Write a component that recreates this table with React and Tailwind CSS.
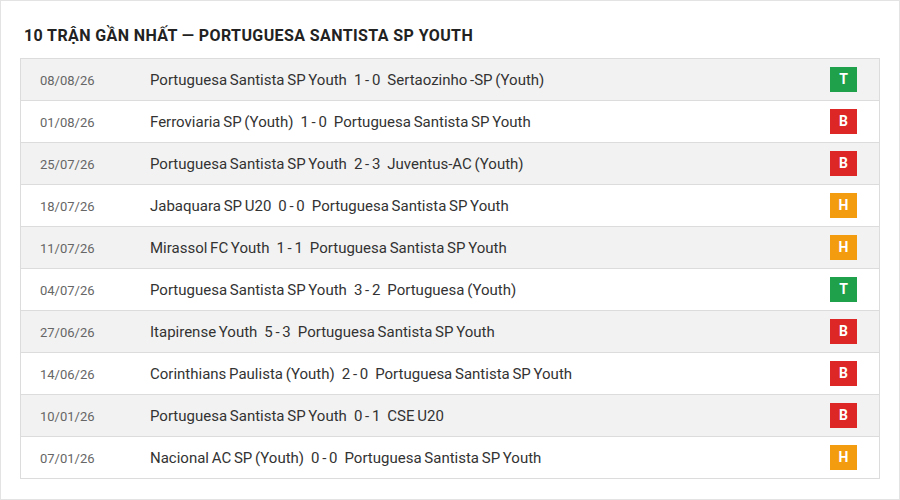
const rows = [
  ["08/08/26", "Portuguesa Santista SP Youth", "1 - 0", "Sertaozinho -SP (Youth)", "T"],
  ["01/08/26", "Ferroviaria SP (Youth)", "1 - 0", "Portuguesa Santista SP Youth", "B"],
  ["25/07/26", "Portuguesa Santista SP Youth", "2 - 3", "Juventus-AC (Youth)", "B"],
  ["18/07/26", "Jabaquara SP U20", "0 - 0", "Portuguesa Santista SP Youth", "H"],
  ["11/07/26", "Mirassol FC Youth", "1 - 1", "Portuguesa Santista SP Youth", "H"],
  ["04/07/26", "Portuguesa Santista SP Youth", "3 - 2", "Portuguesa (Youth)", "T"],
  ["27/06/26", "Itapirense Youth", "5 - 3", "Portuguesa Santista SP Youth", "B"],
  ["14/06/26", "Corinthians Paulista (Youth)", "2 - 0", "Portuguesa Santista SP Youth", "B"],
  ["10/01/26", "Portuguesa Santista SP Youth", "0 - 1", "CSE U20", "B"],
  ["07/01/26", "Nacional AC SP (Youth)", "0 - 0", "Portuguesa Santista SP Youth", "H"],
];

const badge = {
  T: "bg-[#1fa04a]",
  B: "bg-[#dd2626]",
  H: "bg-[#f39c0f]",
};

export default function App() {
  return (
    <div
      className="w-[900px] h-[500px] border border-[#e3e3e3] bg-white px-[19px] box-border"
      style={{ fontFamily: "Roboto, 'Liberation Sans', sans-serif" }}
    >
      <div className="h-[57px] flex items-center pl-[4px] pt-[12px]">
        <h1 className="text-[16px] font-bold text-[#222] tracking-[0.4px]">
          10 TRẬN GẦN NHẤT — PORTUGUESA SANTISTA SP YOUTH
        </h1>
      </div>
      <div className="border border-[#dcdcdc] border-b-0">
        {rows.map((r, i) => (
          <div
            key={i}
            className={`h-[42px] flex items-center border-b border-[#dcdcdc] ${
              i % 2 === 0 ? "bg-[#f2f2f2]" : "bg-white"
            }`}
          >
            <div className="w-[129px] pl-[19px] pt-[2px] text-[13px] text-[#666]">{r[0]}</div>
            <div className="flex-1 pt-[2px] text-[15px] text-[#333] flex items-center [word-spacing:-1px]">
              <span>{r[1]}</span>
              <span className="mx-[7px]">{r[2]}</span>
              <span>{r[3]}</span>
            </div>
            <div
              className={`w-[27px] h-[25px] mr-[22px] flex items-center justify-center text-white text-[14px] font-bold ${badge[r[4]]}`}
            >
              {r[4]}
            </div>
          </div>
        ))}
      </div>
    </div>
  );
}
